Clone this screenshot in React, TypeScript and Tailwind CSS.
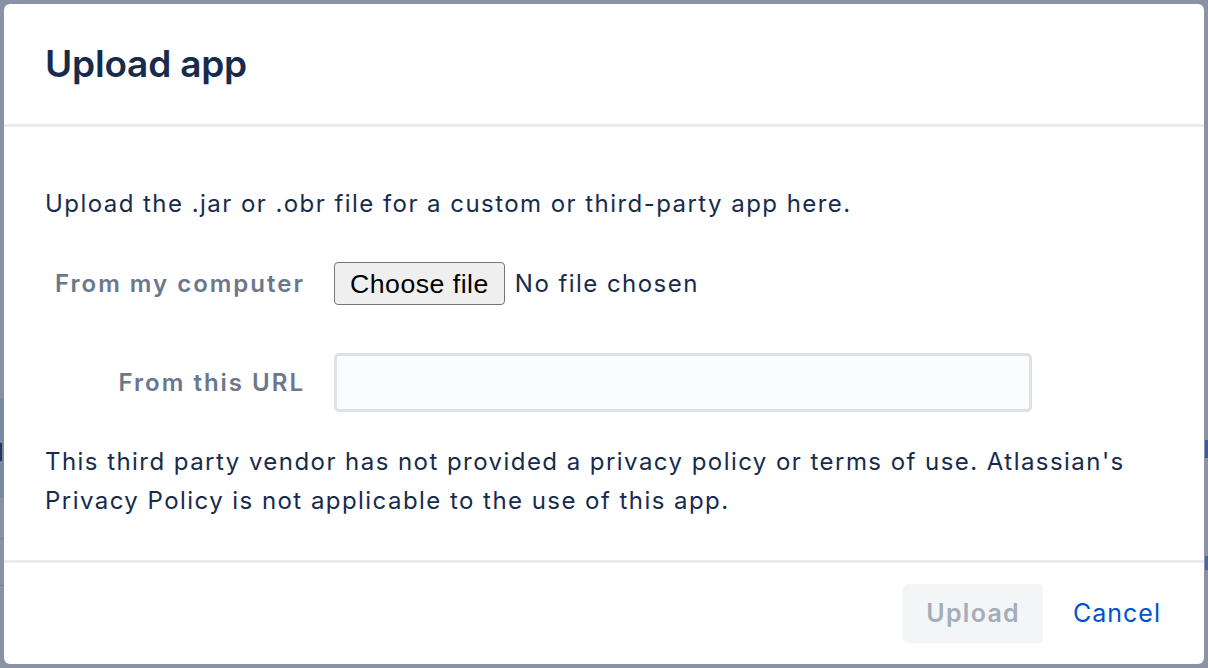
export default function App() {
  return (
    <div
      className="relative h-[668px] w-[1208px] overflow-hidden bg-[#8993a5]"
      style={{ fontFamily: "Inter, 'Noto Sans', sans-serif" }}
    >
      {/* page behind the overlay, barely visible at the edges */}
      <div className="absolute left-0 top-[398px] h-[100px] w-[4px] bg-[#7c89a3]" />
      <div className="absolute left-0 top-[443px] h-[18px] w-[2px] bg-[#25365a]" />
      <div className="absolute left-0 top-[538px] h-[1px] w-[4px] bg-[#77808f]" />
      <div className="absolute left-0 top-[585px] h-[1px] w-[4px] bg-[#77808f]" />
      <div className="absolute right-0 top-[440px] h-[18px] w-[3px] bg-[#3d5c9c]" />
      <div className="absolute right-0 top-[556px] h-[14px] w-[3px] bg-[#4b66a0]" />

      {/* dialog */}
      <div className="absolute left-[4px] top-[4px] flex h-[660px] w-[1200px] flex-col overflow-hidden rounded-[6px] bg-white text-[#172b4d]">
        <header className="flex h-[120px] shrink-0 items-center px-[41px]">
          <h1 className="text-[37px] font-semibold tracking-[-0.2px]">Upload app</h1>
        </header>
        <div className="h-[3px] shrink-0 bg-[#ebecf0]" />

        <div className="flex-1 px-[41px] pt-[57px] text-[24px] tracking-[1.45px]">
          <p className="leading-[39px]">
            Upload the .jar or .obr file for a custom or third-party app here.
          </p>

          <div className="mt-[39px] flex h-[43px] items-center">
            <span className="w-[260px] text-right font-semibold tracking-[2px] text-[#6b778c]">
              From my computer
            </span>
            <div className="ml-[29px] flex items-center">
              <span
                className="flex h-[43px] items-center rounded-[4px] border border-[#767676] bg-[#efefef] px-[15px] text-[26.67px] tracking-[0.5px] text-black"
                style={{ fontFamily: "'Liberation Sans', Arial, sans-serif" }}
              >
                Choose file
              </span>
              <span className="ml-[10px]">No file chosen</span>
            </div>
          </div>

          <div className="mt-[48px] flex h-[59px] items-center">
            <span className="w-[260px] text-right font-semibold tracking-[2px] text-[#6b778c]">
              From this URL
            </span>
            <input
              type="text"
              className="ml-[29px] h-[59px] w-[698px] rounded-[5px] border-[3px] border-[#dfe1e6] bg-[#fafbfc] px-[12px] outline-none"
            />
          </div>

          <p className="mt-[30px] leading-[39px]">
            This third party vendor has not provided a privacy policy or terms of use. Atlassian's
            <br />
            Privacy Policy is not applicable to the use of this app.
          </p>
        </div>

        <div className="h-[3px] shrink-0 bg-[#ebecf0]" />
        <footer className="flex h-[101px] shrink-0 items-center justify-end pr-[20px]">
          <button
            disabled
            className="h-[59px] rounded-[5px] bg-[#f4f5f7] px-[23px] text-[25px] font-semibold tracking-[1.3px] text-[#a5adba]"
          >
            Upload
          </button>
          <button className="ml-[7px] h-[59px] px-[23px] text-[25px] tracking-[1px] text-[#0052cc]">
            Cancel
          </button>
        </footer>
      </div>
    </div>
  );
}
